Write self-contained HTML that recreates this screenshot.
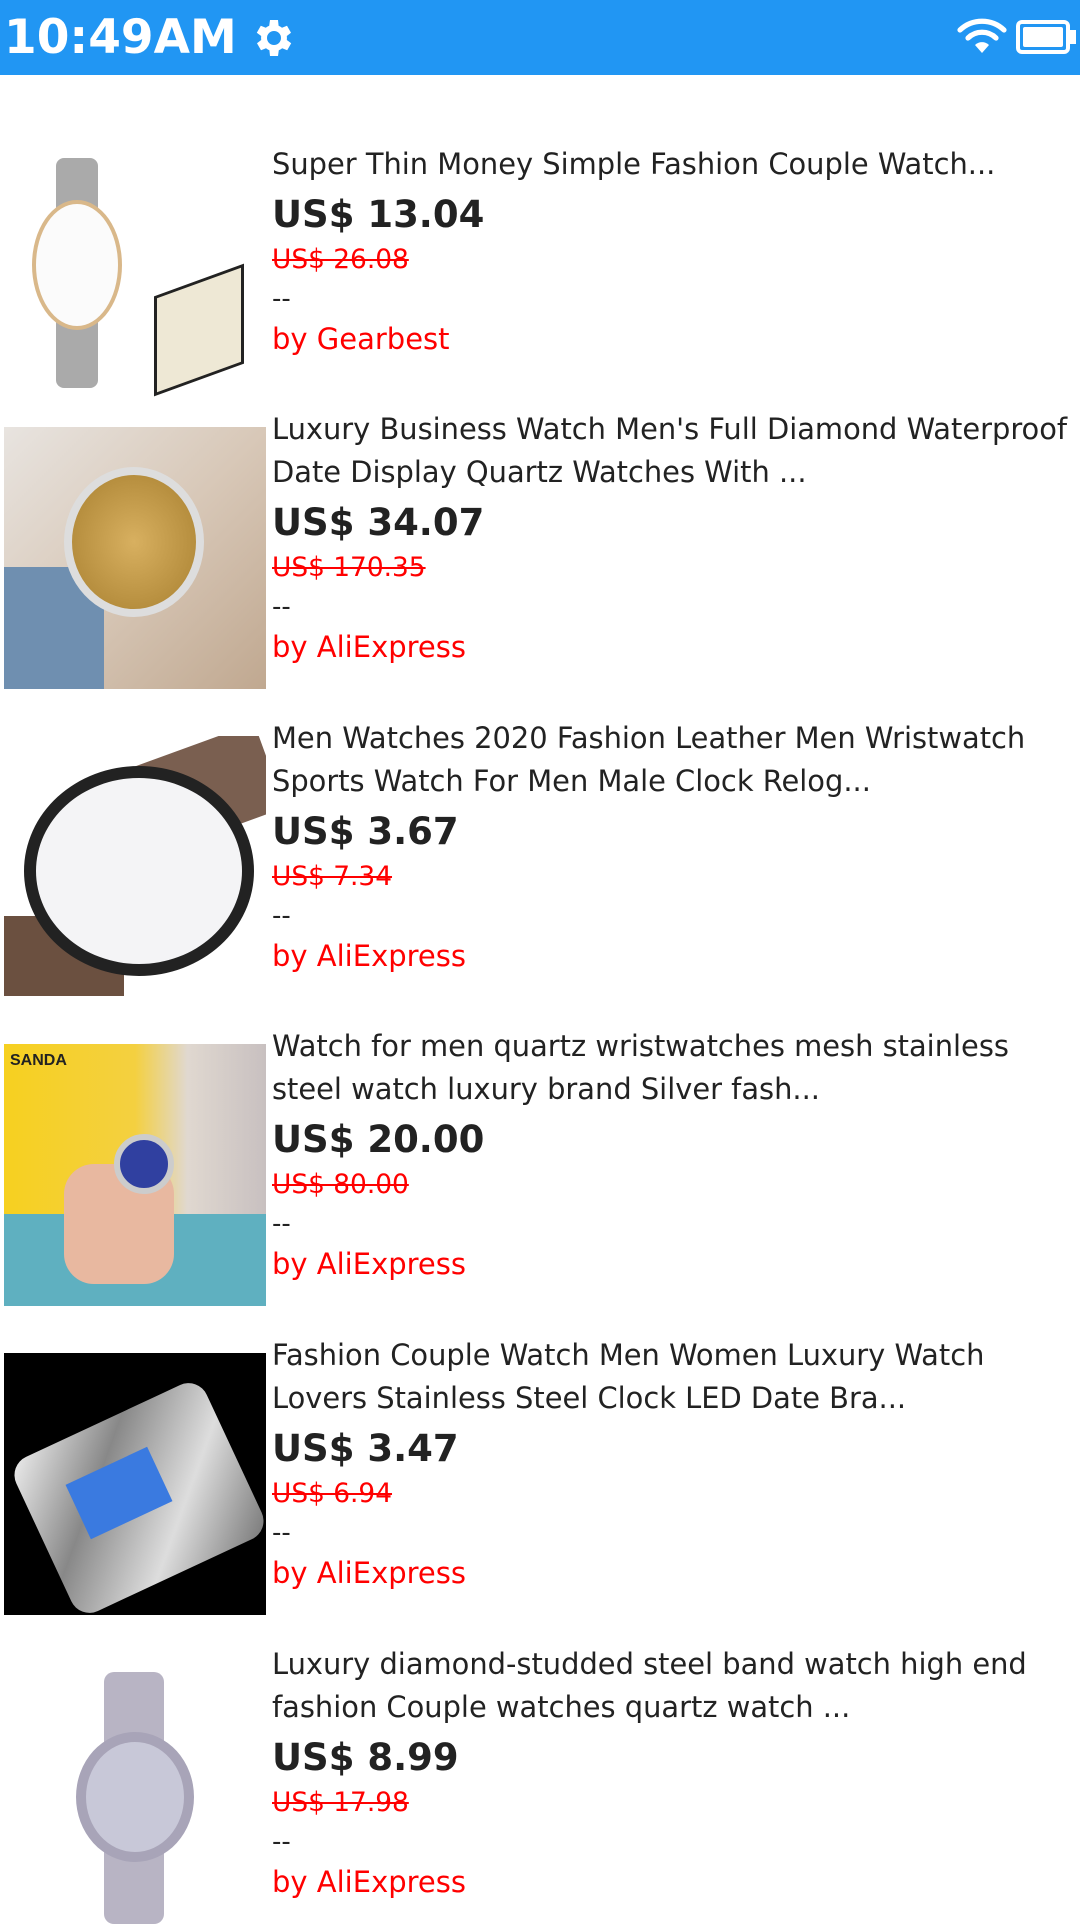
<!DOCTYPE html>
<html><head><meta charset="utf-8"><style>
*{margin:0;padding:0;box-sizing:border-box}
body{width:1080px;height:1920px;background:#fff;font-family:"DejaVu Sans","Liberation Sans",sans-serif;position:relative;overflow:hidden;color:#222}
.sb{position:absolute;left:0;top:0;width:1080px;height:75px;background:#2196F3}
.time{position:absolute;left:4px;top:8px;color:#fff;font-weight:bold;font-size:47px;line-height:60px}
.img{position:absolute;left:4px;width:262px;height:262px;overflow:hidden}
.blk{position:absolute;left:272px;width:808px}
.t{font-size:28.9px;line-height:43px;color:#222;white-space:nowrap}
.p{font-size:37px;line-height:57px;font-weight:bold;color:#222}
.o{font-size:26.4px;line-height:33px;color:#f00;text-decoration:line-through}
.d{font-size:26px;line-height:46px;color:#222}
.b{font-size:29px;line-height:35px;color:#f00}
</style></head><body>
<div class="sb">
<div class="time">10:49AM</div>
<svg style="position:absolute;left:248px;top:14px" width="48" height="48" viewBox="0 0 24 24"><path fill="#fff" d="M19.4 13a7.5 7.5 0 0 0 0-2l2.1-1.6-2-3.5-2.5 1a7 7 0 0 0-1.7-1L15 3h-4l-.4 2.9a7 7 0 0 0-1.7 1l-2.5-1-2 3.5L6.6 11a7.5 7.5 0 0 0 0 2l-2.1 1.6 2 3.5 2.5-1a7 7 0 0 0 1.7 1L11 21h4l.4-2.9a7 7 0 0 0 1.7-1l2.5 1 2-3.5zM13 15.5a3.5 3.5 0 1 1 0-7 3.5 3.5 0 0 1 0 7z"/></svg>
<svg style="position:absolute;left:956px;top:16px" width="52" height="40" viewBox="0 0 26 20"><g fill="none" stroke="#fff" stroke-width="2.6" stroke-linecap="round"><path d="M2 7a16 16 0 0 1 22 0"/><path d="M6 11a10 10 0 0 1 14 0"/></g><path fill="#fff" d="M9.5 14.5a5 5 0 0 1 7 0L13 18.5z"/></svg>
<div style="position:absolute;left:1016px;top:20px;width:54px;height:34px;border:4px solid #fff;border-radius:6px"><div style="position:absolute;left:3px;top:3px;right:3px;bottom:3px;background:#fff;border-radius:2px"></div></div>
<div style="position:absolute;left:1070px;top:30px;width:6px;height:14px;background:#fff"></div>
</div>

<div class="img" style="top:140px;background:#fff"><div style="position:absolute;left:52px;top:18px;width:42px;height:230px;background:#aaa;border-radius:8px"></div><div style="position:absolute;left:28px;top:60px;width:90px;height:130px;border-radius:50%;background:#fbfbfb;border:4px solid #d9b88a"></div><div style="position:absolute;left:150px;top:140px;width:90px;height:100px;background:#eee8d5;border:3px solid #222;transform:skewY(-20deg)"></div></div>
<div class="blk" style="top:143px"><div class="t">Super Thin Money Simple Fashion Couple Watch...</div><div class="p">US$ 13.04</div><div class="o">US$ 26.08</div><div class="d">--</div><div class="b">by Gearbest</div></div>

<div class="img" style="top:427px;background:linear-gradient(135deg,#e8e4e0,#d8c8b8 50%,#c0a890)"><div style="position:absolute;left:0;top:140px;width:100px;height:122px;background:#6f8fb0"></div><div style="position:absolute;left:60px;top:40px;width:140px;height:150px;border-radius:50%;background:radial-gradient(#d8b060,#a88030);border:8px solid #ddd"></div></div>
<div class="blk" style="top:408px"><div class="t">Luxury Business Watch Men's Full Diamond Waterproof</div><div class="t">Date Display Quartz Watches With ...</div><div class="p">US$ 34.07</div><div class="o">US$ 170.35</div><div class="d">--</div><div class="b">by AliExpress</div></div>

<div class="img" style="top:736px;background:#fff"><div style="position:absolute;left:120px;top:10px;width:150px;height:90px;background:#7a5f50;transform:rotate(-20deg)"></div><div style="position:absolute;left:0;top:180px;width:120px;height:80px;background:#6b5040"></div><div style="position:absolute;left:20px;top:30px;width:230px;height:210px;border-radius:50%;background:#f4f4f6;border:12px solid #222"></div></div>
<div class="blk" style="top:717px"><div class="t">Men Watches 2020 Fashion Leather Men Wristwatch</div><div class="t">Sports Watch For Men Male Clock Relog...</div><div class="p">US$ 3.67</div><div class="o">US$ 7.34</div><div class="d">--</div><div class="b">by AliExpress</div></div>

<div class="img" style="top:1044px;background:linear-gradient(90deg,#f6d020 0%,#f4d040 50%,#e0d8d0 70%,#c8c0c0)"><div style="position:absolute;left:0;top:170px;width:262px;height:92px;background:#5fb0c0"></div><div style="position:absolute;left:60px;top:120px;width:110px;height:120px;background:#e8b8a0;border-radius:30px"></div><div style="position:absolute;left:110px;top:90px;width:60px;height:60px;border-radius:50%;background:#3040a0;border:6px solid #ccc"></div><div style="position:absolute;left:6px;top:8px;font:bold 16px sans-serif;color:#222">SANDA</div></div>
<div class="blk" style="top:1025px"><div class="t">Watch for men quartz wristwatches mesh stainless</div><div class="t">steel watch luxury brand Silver fash...</div><div class="p">US$ 20.00</div><div class="o">US$ 80.00</div><div class="d">--</div><div class="b">by AliExpress</div></div>

<div class="img" style="top:1353px;background:#000"><div style="position:absolute;left:30px;top:60px;width:210px;height:170px;background:linear-gradient(135deg,#eee,#888,#ddd,#777);border-radius:20px;transform:rotate(-25deg)"></div><div style="position:absolute;left:70px;top:110px;width:90px;height:60px;background:#3a7ae0;transform:rotate(-25deg)"></div></div>
<div class="blk" style="top:1334px"><div class="t">Fashion Couple Watch Men Women Luxury Watch</div><div class="t">Lovers Stainless Steel Clock LED Date Bra...</div><div class="p">US$ 3.47</div><div class="o">US$ 6.94</div><div class="d">--</div><div class="b">by AliExpress</div></div>

<div class="img" style="top:1662px;background:#fff"><div style="position:absolute;left:100px;top:10px;width:60px;height:252px;background:#b8b4c4;border-radius:10px"></div><div style="position:absolute;left:72px;top:70px;width:118px;height:130px;border-radius:50%;background:#c8c8d8;border:10px solid #a8a4b8"></div></div>
<div class="blk" style="top:1643px"><div class="t">Luxury diamond-studded steel band watch high end</div><div class="t">fashion Couple watches quartz watch ...</div><div class="p">US$ 8.99</div><div class="o">US$ 17.98</div><div class="d">--</div><div class="b">by AliExpress</div></div>
</body></html>
